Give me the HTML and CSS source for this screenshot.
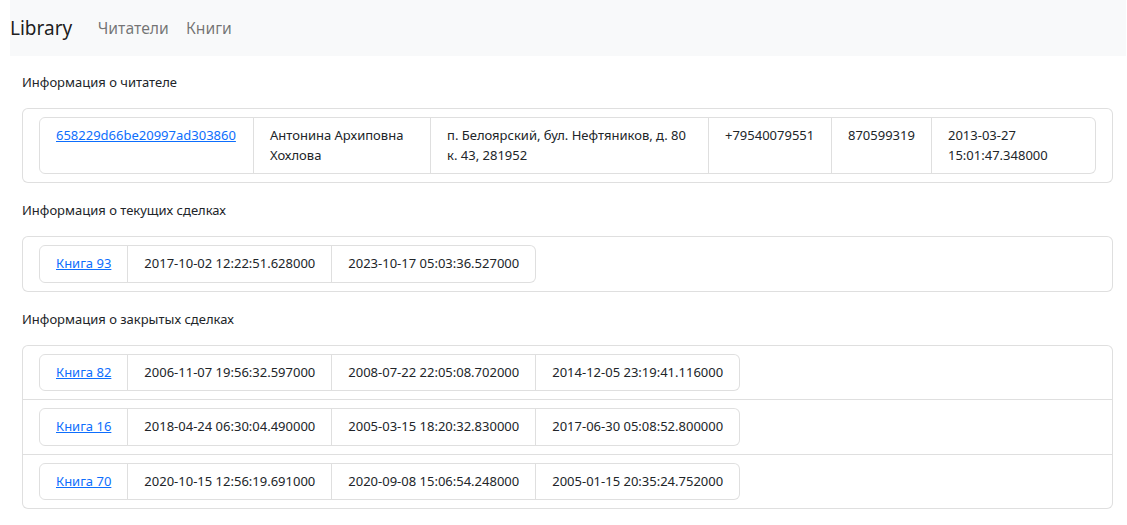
FILE: index.html
```html
<!DOCTYPE html>
<html lang="ru">
<head>
<meta charset="utf-8">
<title>Library</title>
<link rel="stylesheet" href="styles.css">
</head>
<body>
<nav class="navbar">
  <a class="brand" href="#">Library</a>
  <ul class="nav">
    <li><a class="nav-link" href="#">Читатели</a></li>
    <li><a class="nav-link" href="#">Книги</a></li>
  </ul>
</nav>
<main class="content">
  <section class="section">
    <h6 class="section-title">Информация о читателе</h6>
    <div class="card">
      <div class="card-body">
        <ul class="hlist reader">
          <li class="item"><a class="link" href="#">658229d66be20997ad303860</a></li>
          <li class="item">Антонина Архиповна Хохлова</li>
          <li class="item">п. Белоярский, бул. Нефтяников, д. 80 к. 43, 281952</li>
          <li class="item">+79540079551</li>
          <li class="item">870599319</li>
          <li class="item">2013-03-27 15:01:47.348000</li>
        </ul>
      </div>
    </div>
  </section>
  <section class="section">
    <h6 class="section-title">Информация о текущих сделках</h6>
    <div class="card">
      <div class="card-body">
        <ul class="hlist">
          <li class="item"><a class="link" href="#">Книга 93</a></li>
          <li class="item">2017-10-02 12:22:51.628000</li>
          <li class="item">2023-10-17 05:03:36.527000</li>
        </ul>
      </div>
    </div>
  </section>
  <section class="section">
    <h6 class="section-title">Информация о закрытых сделках</h6>
    <div class="card">
      <ul class="rows">
        <li class="row">
          <ul class="hlist">
            <li class="item"><a class="link" href="#">Книга 82</a></li>
            <li class="item">2006-11-07 19:56:32.597000</li>
            <li class="item">2008-07-22 22:05:08.702000</li>
            <li class="item">2014-12-05 23:19:41.116000</li>
          </ul>
        </li>
        <li class="row">
          <ul class="hlist">
            <li class="item"><a class="link" href="#">Книга 16</a></li>
            <li class="item">2018-04-24 06:30:04.490000</li>
            <li class="item">2005-03-15 18:20:32.830000</li>
            <li class="item">2017-06-30 05:08:52.800000</li>
          </ul>
        </li>
        <li class="row">
          <ul class="hlist">
            <li class="item"><a class="link" href="#">Книга 70</a></li>
            <li class="item">2020-10-15 12:56:19.691000</li>
            <li class="item">2020-09-08 15:06:54.248000</li>
            <li class="item">2005-01-15 20:35:24.752000</li>
          </ul>
        </li>
      </ul>
    </div>
  </section>
</main>
</body>
</html>
```
FILE: styles.css
```css
* { box-sizing: border-box; }
html, body { margin: 0; padding: 0; }
body {
  font-family: "Noto Sans", "Open Sans", sans-serif;
  font-size: 13px;
  line-height: 1.5;
  color: #212529;
  background: #fff;
}
.navbar {
  display: flex;
  align-items: center;
  margin-left: 10px;
  width: 1116px;
  padding: 8px 0;
  background: #f8f9fa;
}
.brand {
  font-size: 19px;
  line-height: 30px;
  padding: 5px 0;
  margin-right: 17px;
  color: rgba(0, 0, 0, 0.9);
  text-decoration: none;
}
.nav {
  display: flex;
  list-style: none;
  margin: 0;
  padding: 0;
}
.nav-link {
  display: block;
  padding: 8px 8.5px;
  font-size: 15.75px;
  line-height: 24px;
  color: rgba(0, 0, 0, 0.55);
  text-decoration: none;
}
.content {
  padding: 17px 14px 0 22px;
}
.section { margin-bottom: 18px; }
.section-title {
  margin: 0 0 15.5px;
  font-size: 13px;
  font-weight: 400;
  line-height: 19.5px;
}
.card {
  border: 1px solid rgba(0, 0, 0, 0.125);
  border-radius: 6px;
  background: #fff;
}
.card-body { padding: 8px 16px; }
.hlist {
  display: flex;
  list-style: none;
  margin: 0;
  padding: 0;
}
.item {
  padding: 8px 16px;
  border: 1px solid rgba(0, 0, 0, 0.125);
  border-left-width: 0;
}
.item:first-child {
  border-left-width: 1px;
  border-radius: 6px 0 0 6px;
}
.item:last-child { border-radius: 0 6px 6px 0; }
.reader .item:nth-child(1) { width: 215px; }
.reader .item:nth-child(2) { width: 177px; }
.reader .item:nth-child(3) { width: 278px; }
.reader .item:nth-child(4) { width: 123px; }
.reader .item:nth-child(5) { width: 100px; }
.reader .item:nth-child(6) { width: 164px; }
.link { color: #0d6efd; text-decoration: underline; }
.rows { list-style: none; margin: 0; padding: 0; }
.row { padding: 8px 16px; }
.row + .row { border-top: 1px solid rgba(0, 0, 0, 0.125); }
```
